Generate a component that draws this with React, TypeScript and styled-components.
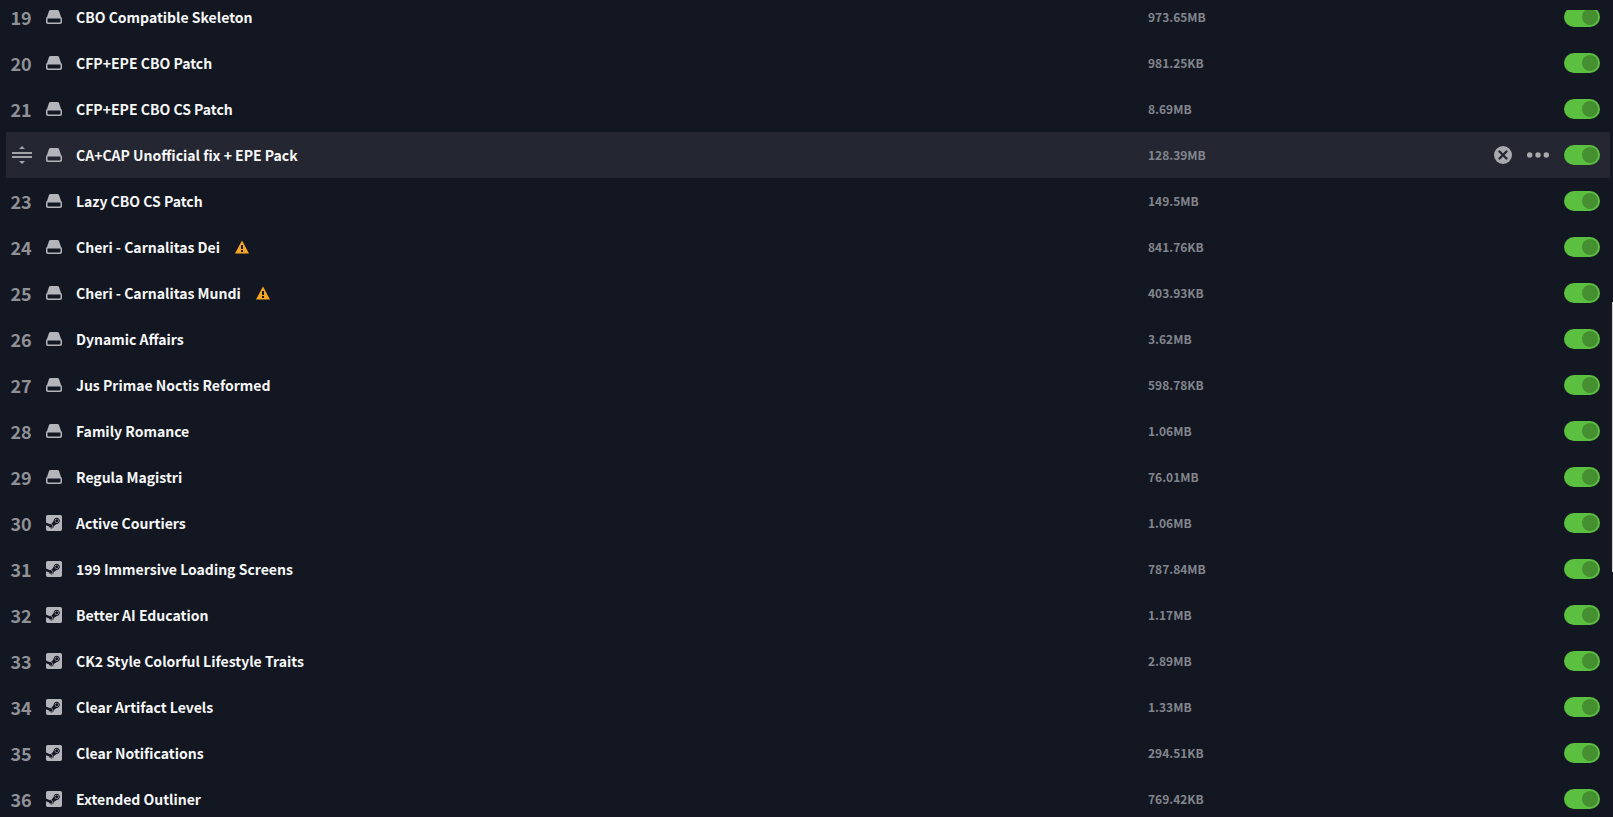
import React from "react";
import styled, { createGlobalStyle } from "styled-components";
import { FaSteamSquare } from "react-icons/fa";

type Source = "local" | "steam";

interface Mod {
  position: number;
  name: string;
  size: string;
  source: Source;
  warning?: boolean;
  active?: boolean;
}

const mods: Mod[] = [
  { position: 19, name: "CBO Compatible Skeleton", size: "973.65MB", source: "local" },
  { position: 20, name: "CFP+EPE CBO Patch", size: "981.25KB", source: "local" },
  { position: 21, name: "CFP+EPE CBO CS Patch", size: "8.69MB", source: "local" },
  { position: 22, name: "CA+CAP Unofficial fix + EPE Pack", size: "128.39MB", source: "local", active: true },
  { position: 23, name: "Lazy CBO CS Patch", size: "149.5MB", source: "local" },
  { position: 24, name: "Cheri - Carnalitas Dei", size: "841.76KB", source: "local", warning: true },
  { position: 25, name: "Cheri - Carnalitas Mundi", size: "403.93KB", source: "local", warning: true },
  { position: 26, name: "Dynamic Affairs", size: "3.62MB", source: "local" },
  { position: 27, name: "Jus Primae Noctis Reformed", size: "598.78KB", source: "local" },
  { position: 28, name: "Family Romance", size: "1.06MB", source: "local" },
  { position: 29, name: "Regula Magistri", size: "76.01MB", source: "local" },
  { position: 30, name: "Active Courtiers", size: "1.06MB", source: "steam" },
  { position: 31, name: "199 Immersive Loading Screens", size: "787.84MB", source: "steam" },
  { position: 32, name: "Better AI Education", size: "1.17MB", source: "steam" },
  { position: 33, name: "CK2 Style Colorful Lifestyle Traits", size: "2.89MB", source: "steam" },
  { position: 34, name: "Clear Artifact Levels", size: "1.33MB", source: "steam" },
  { position: 35, name: "Clear Notifications", size: "294.51KB", source: "steam" },
  { position: 36, name: "Extended Outliner", size: "769.42KB", source: "steam" },
];

const GlobalStyle = createGlobalStyle`
  * { box-sizing: border-box; }
  body {
    margin: 0;
    background: #131722;
    color: #fff;
    font-family: "Noto Sans CJK SC", "Noto Sans", sans-serif;
    overflow: hidden;
  }
`;

const Page = styled.main`
  position: relative;
  height: 100vh;
  padding: 10px 3px 0 6px;
`;

const Viewport = styled.div`
  height: 100%;
  overflow: hidden;
`;

/* The list is scrolled partway into its first visible row. */
const ModList = styled.ul`
  margin: -16px 0 0;
  padding: 0;
  list-style: none;
`;

const Row = styled.li<{ $active?: boolean }>`
  display: grid;
  grid-template-columns: 40px 30px minmax(0, 1072fr) minmax(0, 336fr) 116px;
  align-items: center;
  height: 46px;
  padding-right: 10px;
  background: ${(p) => (p.$active ? "#242732" : "transparent")};
`;

const Position = styled.span`
  width: 30px;
  text-align: center;
  color: #8f9197;
  font-size: 18px;
  font-weight: 700;
  line-height: 24px;
`;

const SourceIcon = styled.svg`
  display: block;
  width: 16px;
  height: 16px;
  fill: #b4b5ba;
`;

const SteamIcon = styled(FaSteamSquare)`
  display: block;
  width: 16px;
  height: 16px;
  color: #b4b5ba;
`;

const DragHandle = styled.button`
  width: 30px;
  height: 24px;
  padding: 0 0 0 6px;
  border: 0;
  background: none;
  cursor: grab;

  svg { display: block; fill: #a2a3a8; }
`;

const Title = styled.div`
  display: flex;
  align-items: center;
  gap: 15px;
  color: #f7f7f8;
  font-size: 14px;
  font-weight: 700;
  line-height: 20px;
  white-space: nowrap;
`;

const Warning = styled.svg`
  width: 14px;
  height: 14px;
`;

const Size = styled.span`
  color: #82858c;
  font-size: 12px;
  font-weight: 700;
  line-height: 20px;
`;

const Actions = styled.div`
  display: flex;
  align-items: center;
  justify-content: flex-end;
  gap: 15px;
`;

const IconButton = styled.button`
  display: block;
  padding: 0;
  border: 0;
  background: none;
  cursor: pointer;

  svg { display: block; }
`;

const Toggle = styled.input`
  appearance: none;
  display: flex;
  align-items: center;
  width: 36px;
  height: 20px;
  margin: 0;
  padding: 2px;
  border-radius: 10px;
  background: #4a4d57;
  cursor: pointer;

  &::before {
    content: "";
    width: 16px;
    height: 16px;
    border-radius: 50%;
    background: #2b2e38;
  }

  &:checked {
    justify-content: flex-end;
    background: #5bbf40;
  }

  &:checked::before { background: #458f31; }
`;

const ScrollThumb = styled.div`
  position: absolute;
  top: 37%;
  right: 0;
  width: 1px;
  height: 33%;
  background: #d0d1d3;
`;

const LocalGlyph = () => (
  <SourceIcon viewBox="0 0 16 16" role="img" aria-label="Local mod">
    <path d="M4.600 1h6.800c.8 0 1.300.4 1.600 1.100L15.200 8.500H.8L3 2.100C3.300 1.400 3.800 1 4.600 1z" />
    <path
      fillRule="evenodd"
      d="M.8 8h14.400l.8 1.500V13c0 1.200-.8 2-2 2H2c-1.200 0-2-.8-2-2V9.500zM1.500 9.500V12.500c0 .6.4 1 1 1h11c.6 0 1-.4 1-1V9.500z"
    />
  </SourceIcon>
);

const SteamGlyph = () => (
  <SteamIcon viewBox="0 32 448 448" role="img" aria-label="Steam Workshop mod" />
);

const ModRow = ({ mod }: { mod: Mod }) => (
  <Row $active={mod.active}>
    {mod.active ? (
      <DragHandle type="button" aria-label={`Move ${mod.name}`}>
        <svg width="20" height="20" viewBox="0 0 20 20">
          <path d="M7 4l3-3 3 3zM0 7h20v2H0zM0 11h20v2H0zM7 16l3 3 3-3z" />
        </svg>
      </DragHandle>
    ) : (
      <Position>{mod.position}</Position>
    )}
    {mod.source === "local" ? <LocalGlyph /> : <SteamGlyph />}
    <Title>
      <span>{mod.name}</span>
      {mod.warning && (
        <Warning viewBox="0 0 14 14" role="img" aria-label="Warning">
          <path d="M7 .5L14 13.500H0z" fill="#f5a623" />
          <path d="M6 5h2v4H6zM6 10h2v2H6z" fill="#131722" />
        </Warning>
      )}
    </Title>
    <Size>{mod.size}</Size>
    <Actions>
      {mod.active && (
        <>
          <IconButton type="button" aria-label={`Remove ${mod.name}`}>
            <svg width="18" height="18" viewBox="0 0 18 18">
              <circle cx="9" cy="9" r="9" fill="#a9aaae" />
              <path d="M5.500 5.500l7 7M12.500 5.500l-7 7" stroke="#242732" strokeWidth="2.400" strokeLinecap="round" />
            </svg>
          </IconButton>
          <IconButton type="button" aria-label={`More options for ${mod.name}`}>
            <svg width="22" height="6" viewBox="0 0 22 6" fill="#a9aaae">
              <circle cx="2.700" cy="3" r="2.700" />
              <circle cx="11" cy="3" r="2.700" />
              <circle cx="19.300" cy="3" r="2.700" />
            </svg>
          </IconButton>
        </>
      )}
      <Toggle type="checkbox" role="switch" aria-label={`Enable ${mod.name}`} defaultChecked />
    </Actions>
  </Row>
);

export default function App() {
  return (
    <Page>
      <GlobalStyle />
      <Viewport>
        <ModList>
          {mods.map((mod) => (
            <ModRow key={mod.position} mod={mod} />
          ))}
        </ModList>
      </Viewport>
      <ScrollThumb />
    </Page>
  );
}
